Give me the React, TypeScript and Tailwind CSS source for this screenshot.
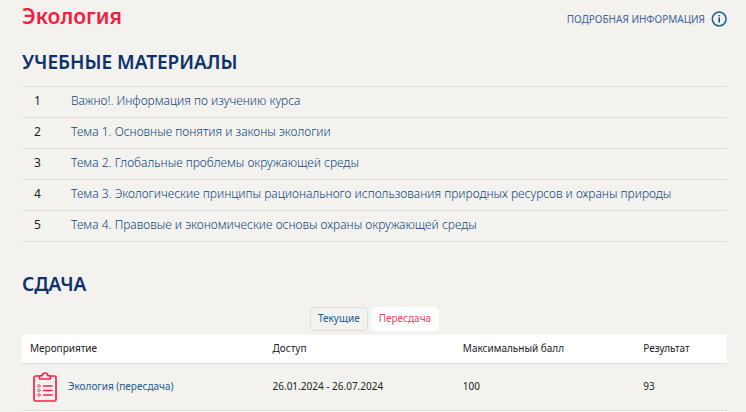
import React, { useState } from 'react';

const materials = [
  'Важно!. Информация по изучению курса',
  'Тема 1. Основные понятия и законы экологии',
  'Тема 2. Глобальные проблемы окружающей среды',
  'Тема 3. Экологические принципы рационального использования природных ресурсов и охраны природы',
  'Тема 4. Правовые и экономические основы охраны окружающей среды',
];

const tabs = [
  { id: 'current', label: 'Текущие' },
  { id: 'retake', label: 'Пересдача' },
];

const events = [
  { title: 'Экология (пересдача)', access: '26.01.2024 - 26.07.2024', max: 100, result: 93 },
];

function InfoIcon() {
  return (
    <svg className="size-4" viewBox="0 0 16 16" fill="none" aria-hidden="true">
      <circle cx="8.2" cy="8" r="6.9" stroke="#17639b" strokeWidth="1.5" />
      <path d="M8.2 6.6V11.4" stroke="#173f73" strokeWidth="1.5" />
      <circle cx="8.2" cy="4.7" r="0.8" fill="#173f73" />
    </svg>
  );
}

function ClipboardIcon() {
  return (
    <svg className="h-[30px] w-6 shrink-0" viewBox="0 0 24 30" fill="none" stroke="#f8234b" aria-hidden="true">
      <path d="M7 4H2.5Q1 4 1 5.5V27.5Q1 29 2.5 29H21.5Q23 29 23 27.5V5.5Q23 4 21.5 4H17" strokeWidth="1.7" />
      <path d="M6.5 7V5Q6.5 3.6 8 3.6H9.2Q9.5 1 12 1T14.8 3.6H16Q17.5 3.6 17.5 5V7Z" strokeWidth="1.6" strokeLinejoin="round" />
      <path d="M10.5 14H19M10.5 18.5H19M10.5 23H19" strokeWidth="1.6" strokeLinecap="round" />
      <circle cx="6" cy="14" r="1.3" strokeWidth="0.8" />
      <circle cx="6" cy="18.5" r="1.3" strokeWidth="0.8" />
      <circle cx="6" cy="23" r="1.3" strokeWidth="0.8" />
    </svg>
  );
}

export default function App() {
  const [activeTab, setActiveTab] = useState('retake');

  return (
    <div className="min-h-screen bg-[#f3f2ee] pr-[19px] pl-[22px] font-['Noto_Sans','Open_Sans',sans-serif] text-xs text-[#222222]">
      <header className="flex items-center justify-between pt-1">
        <h1 className="text-[21px] leading-6 font-semibold text-[#f0203e]">Экология</h1>
        <a href="#info" className="mt-1.5 flex items-center gap-1.5 text-[10px] leading-4 text-[#42659a]">
          ПОДРОБНАЯ ИНФОРМАЦИЯ
          <InfoIcon />
        </a>
      </header>

      <section className="pt-5">
        <h2 className="text-[19px] leading-7 font-semibold text-[#0d326b]">УЧЕБНЫЕ МАТЕРИАЛЫ</h2>
        <ol className="mt-2.5 border-t border-[#dfdedb]">
          {materials.map((title, index) => (
            <li key={title} className="flex h-[31px] items-center border-b border-[#dfdedb] pb-0.5">
              <span className="w-[49px] pl-3">{index + 1}</span>
              <a href="#material" className="font-light text-[#0f477d]">{title}</a>
            </li>
          ))}
        </ol>
      </section>

      <section className="pt-7">
        <h2 className="text-[19px] leading-7 font-semibold text-[#0d326b]">СДАЧА</h2>
        <div className="mt-[9px] flex justify-center gap-[3px]">
          {tabs.map((tab) => (
            <button
              key={tab.id}
              onClick={() => setActiveTab(tab.id)}
              className={`h-6 rounded border px-[7px] text-[10px] ${
                activeTab === tab.id
                  ? 'border-white bg-white text-[#ef4260]'
                  : 'border-[#dfdedb] text-[#235a8c]'
              }`}
            >
              {tab.label}
            </button>
          ))}
        </div>

        <table className="mt-1 w-full table-fixed border-collapse text-left text-[10px]">
          <colgroup>
            <col className="w-[34.4%]" />
            <col className="w-[27%]" />
            <col className="w-[25.6%]" />
            <col className="w-[13%]" />
          </colgroup>
          <thead>
            <tr className="h-7 border-b border-[#dfdedb] bg-white">
              <th className="px-2 font-normal">Мероприятие</th>
              <th className="px-2 font-normal">Доступ</th>
              <th className="px-2 font-normal">Максимальный балл</th>
              <th className="px-2 font-normal">Результат</th>
            </tr>
          </thead>
          <tbody>
            {events.map((event) => (
              <tr key={event.title} className="h-[47px] border-b border-[#dfdedb]">
                <td className="px-2">
                  <a href="#event" className="flex items-center gap-[11px] pl-[3px] text-[#235a8c]">
                    <ClipboardIcon />
                    {event.title}
                  </a>
                </td>
                <td className="px-2">{event.access}</td>
                <td className="px-2">{event.max}</td>
                <td className="px-2">{event.result}</td>
              </tr>
            ))}
          </tbody>
        </table>
        <div className="h-px bg-white" />
      </section>
    </div>
  );
}
